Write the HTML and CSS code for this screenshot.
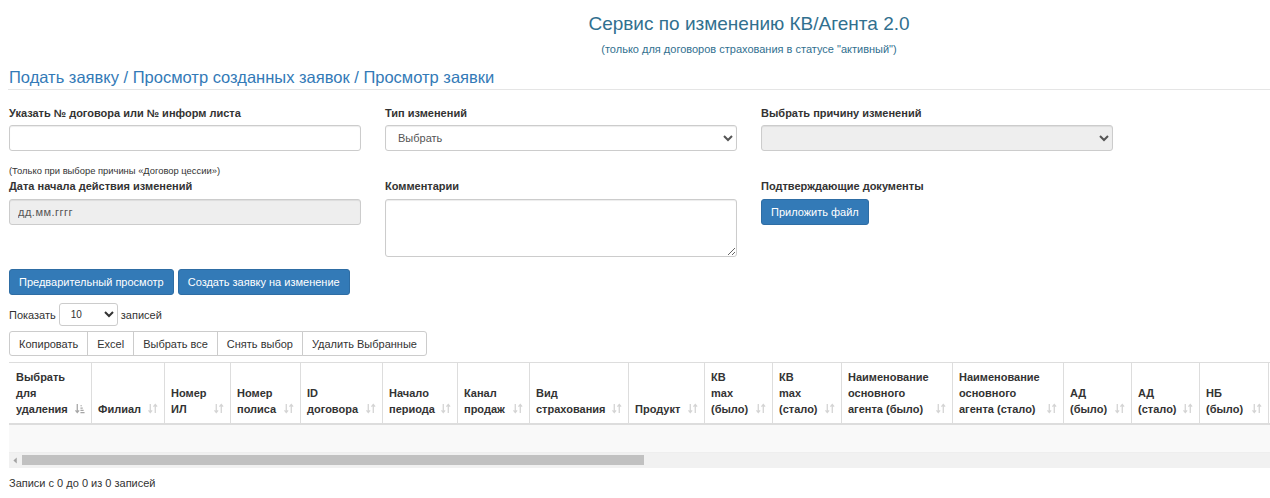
FILE: index.html
```html
<!DOCTYPE html>
<html lang="ru">
<head>
<meta charset="utf-8">
<title>Сервис по изменению КВ/Агента 2.0</title>
<link rel="stylesheet" href="styles.css">
</head>
<body>
<div class="page">
  <header class="head">
    <h1 class="title">Сервис по изменению КВ/Агента 2.0</h1>
    <p class="subtitle">(только для договоров страхования в статусе "активный")</p>
  </header>
  <h2 class="crumbs">Подать заявку / Просмотр созданных заявок / Просмотр заявки</h2>

  <form class="form">
    <label class="lbl r1">Указать № договора или № информ листа</label>
    <label class="lbl r1">Тип изменений</label>
    <label class="lbl r1">Выбрать причину изменений</label>

    <input class="ctl r2" type="text">
    <select class="ctl sel r2"><option>Выбрать</option></select>
    <select class="ctl sel r2" disabled><option></option></select>

    <div class="note">(Только при выборе причины «Договор цессии»)</div>

    <label class="lbl r4 c1">Дата начала действия изменений</label>
    <label class="lbl r4 c2">Комментарии</label>
    <label class="lbl r4 c3">Подтверждающие документы</label>

    <input class="ctl r5 c1 date" type="text" value="дд.мм.гггг" readonly>
    <textarea class="ctl r5 c2 area"></textarea>
    <div class="r5 c3"><button type="button" class="btn">Приложить файл</button></div>
  </form>

  <div class="actions">
    <button type="button" class="btn">Предварительный просмотр</button>
    <button type="button" class="btn">Создать заявку на изменение</button>
  </div>

  <div class="length">
    <span>Показать</span>
    <select class="len-sel"><option>10</option><option>25</option></select>
    <span>записей</span>
  </div>

  <div class="dt-buttons">
    <button type="button" class="dtb">Копировать</button>
    <button type="button" class="dtb">Excel</button>
    <button type="button" class="dtb">Выбрать все</button>
    <button type="button" class="dtb">Снять выбор</button>
    <button type="button" class="dtb">Удалить Выбранные</button>
  </div>

  <div class="scroll">
    <table class="grid">
      <thead>
        <tr>
          <th class="w1">Выбрать для удаления<svg class="sort on" viewBox="0 0 11 12"><path d="M2.5 1v9M0.5 8l2 2.5 2-2.5" fill="none" stroke="currentColor" stroke-width="1.4"/><path d="M6 10.5h4.5M6 8h3.5M6 5.5h2.5M6 3h1.5" stroke="currentColor" stroke-width="1.3"/></svg></th>
          <th class="w2">Филиал<svg class="sort" viewBox="0 0 11 12"><path d="M2.5 1v9.5M0.5 8l2 2.5 2-2.5M8 11V1.5M6 4l2-2.5 2 2.5" fill="none" stroke="currentColor" stroke-width="1.4"/></svg></th>
          <th class="w3">Номер ИЛ<svg class="sort" viewBox="0 0 11 12"><path d="M2.5 1v9.5M0.5 8l2 2.5 2-2.5M8 11V1.5M6 4l2-2.5 2 2.5" fill="none" stroke="currentColor" stroke-width="1.4"/></svg></th>
          <th class="w4">Номер полиса<svg class="sort" viewBox="0 0 11 12"><path d="M2.5 1v9.5M0.5 8l2 2.5 2-2.5M8 11V1.5M6 4l2-2.5 2 2.5" fill="none" stroke="currentColor" stroke-width="1.4"/></svg></th>
          <th class="w5">ID договора<svg class="sort" viewBox="0 0 11 12"><path d="M2.5 1v9.5M0.5 8l2 2.5 2-2.5M8 11V1.5M6 4l2-2.5 2 2.5" fill="none" stroke="currentColor" stroke-width="1.4"/></svg></th>
          <th class="w6">Начало периода<svg class="sort" viewBox="0 0 11 12"><path d="M2.5 1v9.5M0.5 8l2 2.5 2-2.5M8 11V1.5M6 4l2-2.5 2 2.5" fill="none" stroke="currentColor" stroke-width="1.4"/></svg></th>
          <th class="w7">Канал продаж<svg class="sort" viewBox="0 0 11 12"><path d="M2.5 1v9.5M0.5 8l2 2.5 2-2.5M8 11V1.5M6 4l2-2.5 2 2.5" fill="none" stroke="currentColor" stroke-width="1.4"/></svg></th>
          <th class="w8">Вид страхования<svg class="sort" viewBox="0 0 11 12"><path d="M2.5 1v9.5M0.5 8l2 2.5 2-2.5M8 11V1.5M6 4l2-2.5 2 2.5" fill="none" stroke="currentColor" stroke-width="1.4"/></svg></th>
          <th class="w9">Продукт<svg class="sort" viewBox="0 0 11 12"><path d="M2.5 1v9.5M0.5 8l2 2.5 2-2.5M8 11V1.5M6 4l2-2.5 2 2.5" fill="none" stroke="currentColor" stroke-width="1.4"/></svg></th>
          <th class="w10 narrow">КВ max (было)<svg class="sort" viewBox="0 0 11 12"><path d="M2.5 1v9.5M0.5 8l2 2.5 2-2.5M8 11V1.5M6 4l2-2.5 2 2.5" fill="none" stroke="currentColor" stroke-width="1.4"/></svg></th>
          <th class="w11 narrow">КВ max (стало)<svg class="sort" viewBox="0 0 11 12"><path d="M2.5 1v9.5M0.5 8l2 2.5 2-2.5M8 11V1.5M6 4l2-2.5 2 2.5" fill="none" stroke="currentColor" stroke-width="1.4"/></svg></th>
          <th class="w12">Наименование основного агента (было)<svg class="sort" viewBox="0 0 11 12"><path d="M2.5 1v9.5M0.5 8l2 2.5 2-2.5M8 11V1.5M6 4l2-2.5 2 2.5" fill="none" stroke="currentColor" stroke-width="1.4"/></svg></th>
          <th class="w13">Наименование основного агента (стало)<svg class="sort" viewBox="0 0 11 12"><path d="M2.5 1v9.5M0.5 8l2 2.5 2-2.5M8 11V1.5M6 4l2-2.5 2 2.5" fill="none" stroke="currentColor" stroke-width="1.4"/></svg></th>
          <th class="w14">АД (было)<svg class="sort" viewBox="0 0 11 12"><path d="M2.5 1v9.5M0.5 8l2 2.5 2-2.5M8 11V1.5M6 4l2-2.5 2 2.5" fill="none" stroke="currentColor" stroke-width="1.4"/></svg></th>
          <th class="w15">АД (стало)<svg class="sort" viewBox="0 0 11 12"><path d="M2.5 1v9.5M0.5 8l2 2.5 2-2.5M8 11V1.5M6 4l2-2.5 2 2.5" fill="none" stroke="currentColor" stroke-width="1.4"/></svg></th>
          <th class="w16">НБ (было)<svg class="sort" viewBox="0 0 11 12"><path d="M2.5 1v9.5M0.5 8l2 2.5 2-2.5M8 11V1.5M6 4l2-2.5 2 2.5" fill="none" stroke="currentColor" stroke-width="1.4"/></svg></th>
          <th class="w17"></th>
        </tr>
      </thead>
      <tbody>
        <tr><td colspan="17" class="empty"></td></tr>
      </tbody>
    </table>
    <div class="hbar">
      <svg class="hbar-arrow" viewBox="0 0 6 8"><path d="M4.5 0.5v7L0.5 4z" fill="currentColor"/></svg>
      <div class="hbar-thumb"></div>
    </div>
  </div>

  <div class="info">Записи с 0 до 0 из 0 записей</div>
</div>
</body>
</html>
```

FILE: styles.css
```css
* { box-sizing: border-box; }
html, body { margin: 0; padding: 0; background: #fff; }
body {
  font-family: "Liberation Sans", Arial, sans-serif;
  font-size: 11px;
  line-height: 16px;
  color: #333;
  overflow: hidden;
}
.page { padding-left: 9px; }

.head {
  padding-left: 219px;
  text-align: center;
  padding-top: 13px;
}
.title {
  margin: 0;
  font-size: 19px;
  line-height: 22px;
  font-weight: normal;
  color: #31708f;
}
.subtitle {
  margin: 7px 0 0;
  font-size: 11px;
  line-height: 14px;
  color: #31708f;
}
.crumbs {
  margin: 12px 0 0 -1px;
  padding: 0 0 2px 1px;
  font-size: 16.5px;
  line-height: 19px;
  font-weight: normal;
  color: #337ab7;
  border-bottom: 1px solid #e5e5e5;
}

.form {
  display: grid;
  grid-template-columns: 352px 352px 352px;
  column-gap: 24px;
  margin-top: 15px;
  align-items: start;
}
.lbl { font-weight: bold; line-height: 16px; }
.r1 { grid-row: 1; }
.r2 { grid-row: 2; margin-top: 4px; }
.note { grid-row: 3; grid-column: 1; margin-top: 13px; font-size: 9.4px; line-height: 14px; }
.r4 { grid-row: 4; }
.r5 { grid-row: 5; margin-top: 5px; }
.c1 { grid-column: 1; }
.c2 { grid-column: 2; }
.c3 { grid-column: 3; }

.ctl {
  display: block;
  width: 352px;
  height: 26px;
  border: 1px solid #ccc;
  border-radius: 3px;
  background: #fff;
  font-family: "Liberation Sans", Arial, sans-serif;
  font-size: 11px;
  color: #555;
  padding: 0 8px;
  box-shadow: inset 0 1px 1px rgba(0,0,0,.075);
}
.sel { padding-left: 8px; }
.sel:disabled { background: #eee; opacity: 1; }
.date { background: #eee; color: #555; letter-spacing: 0.5px; }
.area { height: 58px; resize: vertical; padding: 6px 8px; }

.btn {
  display: inline-block;
  height: 26px;
  padding: 0 9px;
  border: 1px solid #2e6da4;
  border-radius: 3px;
  background: #337ab7;
  color: #fff;
  font-family: "Liberation Sans", Arial, sans-serif;
  font-size: 11px;
  line-height: 24px;
}

.actions {
  display: flex;
  gap: 4px;
  margin-top: 12px;
}

.length {
  display: flex;
  align-items: center;
  gap: 3px;
  margin-top: 8px;
  height: 23px;
}
.len-sel {
  width: 59px;
  height: 23px;
  border: 1px solid #ccc;
  border-radius: 3px;
  background: #fff;
  font-family: "Liberation Sans", Arial, sans-serif;
  font-size: 10px;
  color: #333;
  padding: 0 7px;
}

.dt-buttons {
  display: flex;
  margin-top: 5px;
}
.dtb {
  height: 25px;
  padding: 0 9px;
  border: 1px solid #ccc;
  margin-left: -1px;
  background: #fff;
  color: #333;
  font-family: "Liberation Sans", Arial, sans-serif;
  font-size: 11px;
}
.dtb:first-child { margin-left: 0; border-radius: 3px 0 0 3px; }
.dtb:last-child { border-radius: 0 3px 3px 0; }

.scroll {
  margin-top: 6px;
  overflow: hidden;
  width: 100%;
}
.grid {
  table-layout: fixed;
  border-collapse: separate;
  border-spacing: 0;
  width: 1329px;
  border-top: 1px solid #ddd;
}
.grid th {
  position: relative;
  text-align: left;
  vertical-align: bottom;
  font-weight: bold;
  padding: 6px 21px 6px 6px;
  border-right: 1px solid #ddd;
  border-bottom: 2px solid #ddd;
  line-height: 16px;
  height: 62px;
}
.grid th.w1 { padding-left: 7px; }
.grid th.narrow { padding-right: 24px; }
.w1 { width: 83px; }
.w2 { width: 73px; }
.w3 { width: 66px; }
.w4 { width: 70px; }
.w5 { width: 82px; }
.w6 { width: 75px; }
.w7 { width: 72px; }
.w8 { width: 99px; }
.w9 { width: 76px; }
.w10 { width: 68px; }
.w11 { width: 69px; }
.w12 { width: 111px; }
.w13 { width: 111px; }
.w14 { width: 68px; }
.w15 { width: 68px; }
.w16 { width: 69px; }
.w17 { width: 69px; }

.sort {
  position: absolute;
  right: 6px;
  bottom: 9px;
  width: 10px;
  height: 11px;
  color: #d4d4d4;
}
.sort.on { color: #a6a6a6; }

.empty {
  height: 28px;
  background: #f9f9f9;
  border-bottom: 1px solid #eee;
}

.hbar {
  position: relative;
  height: 15px;
  background: #f1f1f1;
}
.hbar-arrow {
  position: absolute;
  left: 4px;
  top: 4px;
  width: 5px;
  height: 7px;
  color: #a3a3a3;
}
.hbar-thumb {
  position: absolute;
  left: 13px;
  top: 2px;
  width: 622px;
  height: 10px;
  background: #c1c1c1;
}

.info {
  margin-top: 7px;
  line-height: 16px;
}
```
